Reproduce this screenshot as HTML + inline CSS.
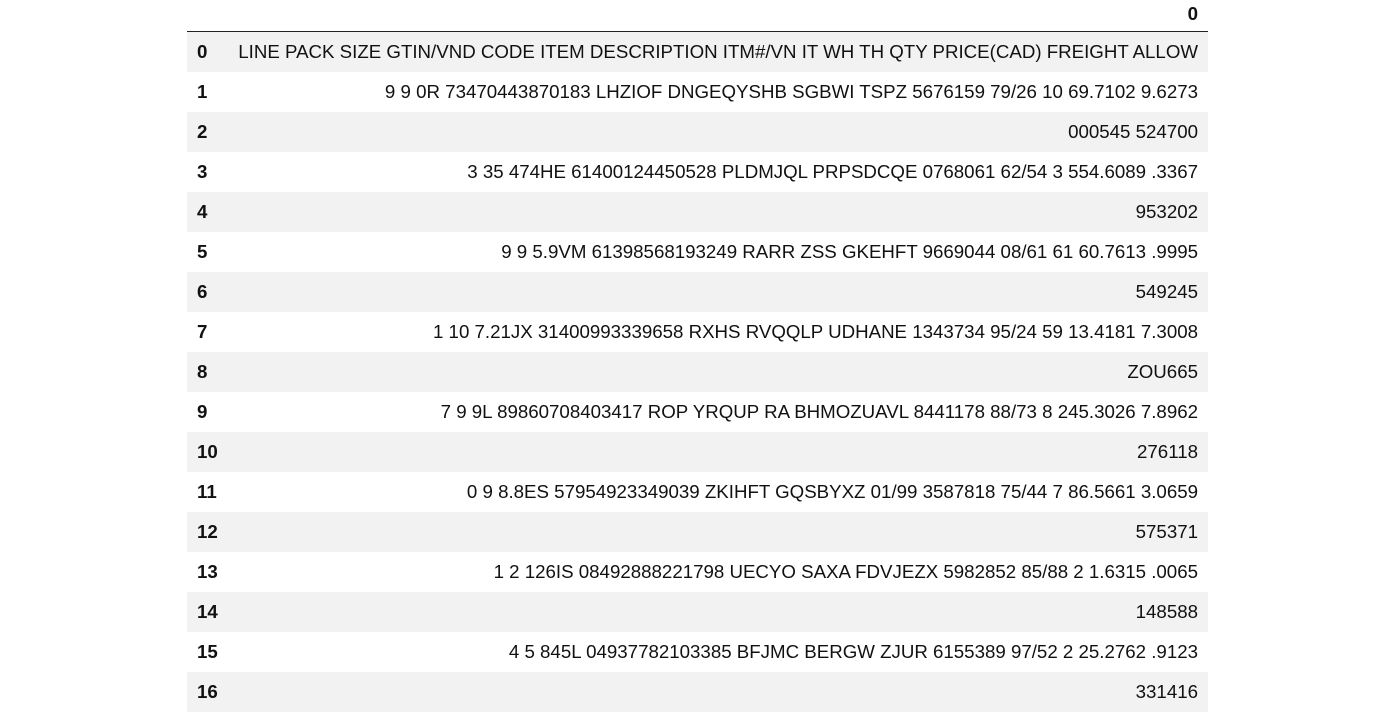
<!DOCTYPE html>
<html><head><style>
body{margin:0;background:#fff;font-family:"Liberation Sans",Arial,sans-serif;font-size:18.7px;color:#111}
table{position:absolute;left:187px;top:0;width:1021px;border-collapse:collapse}
th.h{height:31px;text-align:right;padding:0 10px 8px;font-weight:bold;border-bottom:1.5px solid #222;vertical-align:bottom;line-height:18px;box-sizing:border-box}
th.h0{border-bottom:1.5px solid #222}
td,th.i{height:40px;padding:0 10px;vertical-align:middle;line-height:20px}
th.i{text-align:left;font-weight:bold;width:30px}
td{text-align:right;white-space:nowrap}
tr.g{background:#f2f2f2}
</style></head><body>
<table>
<tr><th class="h0"></th><th class="h">0</th></tr>
<tr class="g"><th class="i">0</th><td>LINE PACK SIZE GTIN/VND CODE ITEM DESCRIPTION ITM#/VN IT WH TH QTY PRICE(CAD) FREIGHT ALLOW</td></tr>
<tr><th class="i">1</th><td>9 9 0R 73470443870183 LHZIOF DNGEQYSHB SGBWI TSPZ 5676159 79/26 10 69.7102 9.6273</td></tr>
<tr class="g"><th class="i">2</th><td>000545 524700</td></tr>
<tr><th class="i">3</th><td>3 35 474HE 61400124450528 PLDMJQL PRPSDCQE 0768061 62/54 3 554.6089 .3367</td></tr>
<tr class="g"><th class="i">4</th><td>953202</td></tr>
<tr><th class="i">5</th><td>9 9 5.9VM 61398568193249 RARR ZSS GKEHFT 9669044 08/61 61 60.7613 .9995</td></tr>
<tr class="g"><th class="i">6</th><td>549245</td></tr>
<tr><th class="i">7</th><td>1 10 7.21JX 31400993339658 RXHS RVQQLP UDHANE 1343734 95/24 59 13.4181 7.3008</td></tr>
<tr class="g"><th class="i">8</th><td>ZOU665</td></tr>
<tr><th class="i">9</th><td>7 9 9L 89860708403417 ROP YRQUP RA BHMOZUAVL 8441178 88/73 8 245.3026 7.8962</td></tr>
<tr class="g"><th class="i">10</th><td>276118</td></tr>
<tr><th class="i">11</th><td>0 9 8.8ES 57954923349039 ZKIHFT GQSBYXZ 01/99 3587818 75/44 7 86.5661 3.0659</td></tr>
<tr class="g"><th class="i">12</th><td>575371</td></tr>
<tr><th class="i">13</th><td>1 2 126IS 08492888221798 UECYO SAXA FDVJEZX 5982852 85/88 2 1.6315 .0065</td></tr>
<tr class="g"><th class="i">14</th><td>148588</td></tr>
<tr><th class="i">15</th><td>4 5 845L 04937782103385 BFJMC BERGW ZJUR 6155389 97/52 2 25.2762 .9123</td></tr>
<tr class="g"><th class="i">16</th><td>331416</td></tr>
</table>
</body></html>
